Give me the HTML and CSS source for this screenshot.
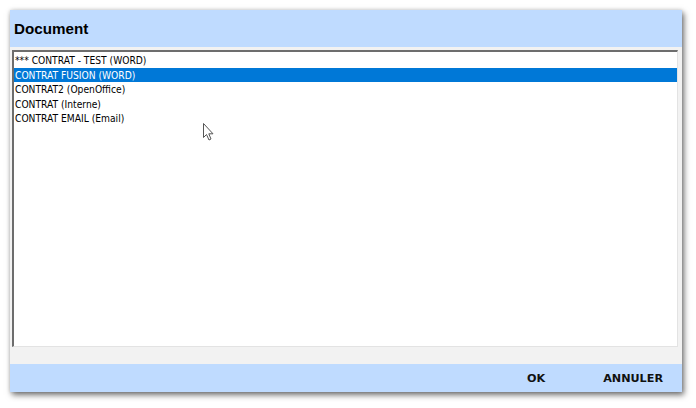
FILE: index.html
```html
<!DOCTYPE html>
<html lang="fr">
<head>
  <meta charset="UTF-8">
  <title>Document</title>
  <link rel="stylesheet" href="styles.css">
</head>
<body>
  <div class="dialog">
    <div class="dialog-header">Document</div>
    <div class="dialog-body">
      <ul class="doc-list">
        <li>*** CONTRAT - TEST (WORD)</li>
        <li class="selected">CONTRAT FUSION (WORD)</li>
        <li>CONTRAT2 (OpenOffice)</li>
        <li>CONTRAT (Interne)</li>
        <li>CONTRAT EMAIL (Email)</li>
      </ul>
      <svg class="cursor" width="13" height="20" viewBox="0 0 13 20">
        <path d="M1.5 1.5 L1.5 15.5 L4.5 12.5 L7 18 L9 17 L6.8 11.8 L11 11.8 Z" fill="#fff" stroke="#555" stroke-width="1"/>
      </svg>
    </div>
    <div class="dialog-footer">
      <button class="btn">OK</button>
      <button class="btn">ANNULER</button>
    </div>
  </div>
</body>
</html>
```

FILE: styles.css
```css
html, body {
  margin: 0;
  padding: 0;
  background: #fff;
}

body {
  padding: 10px;
  font-family: 'DejaVu Sans', 'Liberation Sans', sans-serif;
}

.dialog {
  width: 672px;
  height: 382px;
  display: flex;
  flex-direction: column;
  background: #f2f2f2;
  box-shadow: 2px 3px 6px rgba(0, 0, 0, 0.55), 0 0 4px rgba(0, 0, 0, 0.15);
}

.dialog-header {
  height: 37px;
  padding-left: 4px;
  display: flex;
  align-items: center;
  background: #bfdbff;
  color: #000;
  font-family: 'Liberation Sans', Arial, sans-serif;
  font-weight: bold;
  font-size: 15.2px;
  border-bottom: 3px solid #f2f2f2;
}

.dialog-body {
  position: relative;
  height: 297px;
  padding: 0 4px 0 2px;
}

.doc-list {
  list-style: none;
  margin: 0;
  padding: 1px 0 0 0;
  height: 100%;
  box-sizing: border-box;
  background: #fff;
  border-top: 2px solid #6d6d6d;
  border-left: 2px solid #6d6d6d;
  border-right: 1px solid #e3e3e3;
  border-bottom: 1px solid #e3e3e3;
  font-family: 'DejaVu Sans Condensed', 'DejaVu Sans', sans-serif;
  font-stretch: condensed;
  font-size: 10.2px;
}

.doc-list li {
  height: 14.5px;
  line-height: 15px;
  padding-left: 1px;
  color: #000;
  white-space: nowrap;
}

.doc-list li.selected {
  background: #0078d7;
  color: #fff;
}

.cursor {
  position: absolute;
  left: 192px;
  top: 72px;
}

.dialog-footer {
  margin-top: auto;
  height: 28px;
  display: flex;
  justify-content: flex-end;
  align-items: center;
  gap: 58px;
  padding-right: 19px;
  background: #bfdbff;
}

.btn {
  border: none;
  background: none;
  padding: 0;
  font-family: 'DejaVu Sans', sans-serif;
  font-weight: bold;
  font-size: 11.2px;
  color: #111;
}
```
